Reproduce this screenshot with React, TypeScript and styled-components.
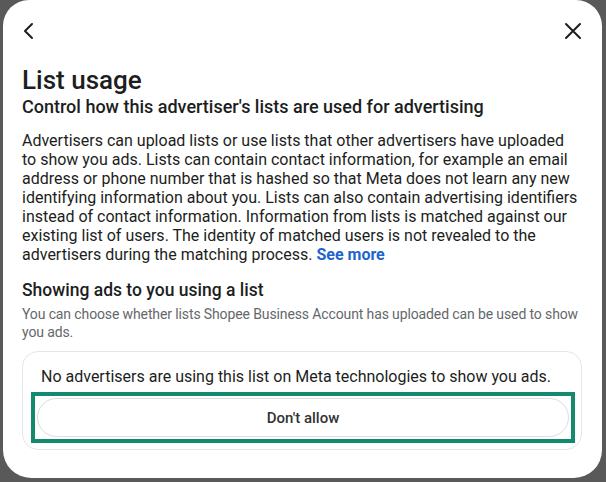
import React from 'react';
import styled, { createGlobalStyle } from 'styled-components';

const GlobalStyle = createGlobalStyle`
  html, body {
    margin: 0;
    padding: 0;
    background: #595959;
  }
  body {
    font-family: Roboto, 'Noto Sans', 'Liberation Sans', sans-serif;
    color: #1c1e21;
  }
`;

const Backdrop = styled.div`
  width: 606px;
  height: 482px;
  padding: 0 4px 4px 3px;
  box-sizing: border-box;
  overflow: hidden;
`;

const Modal = styled.div`
  height: 478px;
  background: #fff;
  border-radius: 26px 26px 28px 28px;
  padding: 0 20px 0 19px;
  box-sizing: border-box;
`;

const Header = styled.div`
  height: 62px;
  display: flex;
  align-items: center;
  justify-content: space-between;
`;

const IconButton = styled.button`
  height: 28px;
  border: none;
  background: none;
  padding: 0;
  display: flex;
  align-items: center;
  color: #1c1e21;
  cursor: pointer;
`;

const Title = styled.h1`
  margin: 2px 0 0;
  font-size: 26px;
  line-height: 32px;
  font-weight: 500;
`;

const Subtitle = styled.h2`
  margin: 0;
  font-size: 18px;
  line-height: 22px;
  font-weight: 500;
`;

const Body = styled.p`
  margin: 13px 0 0;
  font-size: 16px;
  line-height: 19px;
  font-weight: 400;
`;

const Link = styled.a`
  color: #1d64cf;
  font-weight: 700;
  text-decoration: none;
`;

const SectionTitle = styled.h3`
  margin: 15px 0 0;
  font-size: 17.5px;
  line-height: 22px;
  font-weight: 500;
`;

const Hint = styled.p`
  margin: 4px 0 0;
  font-size: 14px;
  line-height: 18px;
  letter-spacing: -0.12px;
  color: #65676b;
`;

const Card = styled.div`
  margin-top: 10px;
  border: 1px solid #e4e6eb;
  border-radius: 16px;
  padding: 14px 6px 6px 8px;
`;

const CardText = styled.div`
  font-size: 16px;
  line-height: 22px;
  padding-left: 10px;
`;

const Highlight = styled.div`
  margin-top: 4px;
  border: 4px solid #138a6e;
  padding: 2px;
`;

const PillButton = styled.button`
  width: 100%;
  height: 39px;
  border: 1px solid #dadde1;
  border-radius: 20px;
  background: #fff;
  font-family: inherit;
  font-size: 15px;
  font-weight: 500;
  color: #333;
  cursor: pointer;
`;

const ChevronLeft = () => (
  <svg width="16" height="18" viewBox="0 0 16 18" fill="none">
    <path d="M10 2L3 9L10 16" stroke="currentColor" strokeWidth="2" strokeLinecap="round" strokeLinejoin="round" />
  </svg>
);

const CloseIcon = () => (
  <svg width="18" height="18" viewBox="0 0 18 18" fill="none">
    <path d="M2 2L16 16M16 2L2 16" stroke="currentColor" strokeWidth="2" strokeLinecap="round" />
  </svg>
);

export default function App() {
  return (
    <>
      <GlobalStyle />
      <Backdrop>
        <Modal>
          <Header>
            <IconButton aria-label="Back">
              <ChevronLeft />
            </IconButton>
            <IconButton aria-label="Close">
              <CloseIcon />
            </IconButton>
          </Header>
          <Title>List usage</Title>
          <Subtitle>Control how this advertiser's lists are used for advertising</Subtitle>
          <Body>
            Advertisers can upload lists or use lists that other advertisers have uploaded to show
            you ads. Lists can contain contact information, for example an email address or phone
            number that is hashed so that Meta does not learn any new identifying information about
            you. Lists can also contain advertising identifiers instead of contact information.
            Information from lists is matched against our existing list of users. The identity of
            matched users is not revealed to the advertisers during the matching process.{' '}
            <Link href="#">See more</Link>
          </Body>
          <SectionTitle>Showing ads to you using a list</SectionTitle>
          <Hint>
            You can choose whether lists Shopee Business Account has uploaded can be used to show
            you ads.
          </Hint>
          <Card>
            <CardText>No advertisers are using this list on Meta technologies to show you ads.</CardText>
            <Highlight>
              <PillButton>Don't allow</PillButton>
            </Highlight>
          </Card>
        </Modal>
      </Backdrop>
    </>
  );
}
